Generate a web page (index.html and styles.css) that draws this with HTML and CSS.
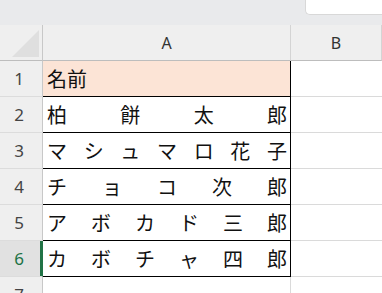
FILE: index.html
```html
<!DOCTYPE html>
<html lang="ja">
<head>
    <meta charset="UTF-8">
    <title>名前一覧</title>
    <link rel="stylesheet" href="styles.css">
</head>
<body>
    <div class="toolbar">
        <div class="namebox"></div>
    </div>
    <div class="sheet">
        <div class="corner"><div class="corner-mark"></div></div>
        <div class="col-head">A</div>
        <div class="col-head">B</div>

        <div class="row-head">1</div>
        <div class="cell title">名前</div>
        <div class="cell-empty"></div>

        <div class="row-head">2</div>
        <div class="cell spread"><span>柏</span><span>餅</span><span>太</span><span>郎</span></div>
        <div class="cell-empty"></div>

        <div class="row-head">3</div>
        <div class="cell spread"><span>マ</span><span>シ</span><span>ュ</span><span>マ</span><span>ロ</span><span>花</span><span>子</span></div>
        <div class="cell-empty"></div>

        <div class="row-head">4</div>
        <div class="cell spread"><span>チ</span><span>ョ</span><span>コ</span><span>次</span><span>郎</span></div>
        <div class="cell-empty"></div>

        <div class="row-head">5</div>
        <div class="cell spread"><span>ア</span><span>ボ</span><span>カ</span><span>ド</span><span>三</span><span>郎</span></div>
        <div class="cell-empty"></div>

        <div class="row-head selected">6</div>
        <div class="cell spread active"><span>カ</span><span>ボ</span><span>チ</span><span>ャ</span><span>四</span><span>郎</span></div>
        <div class="cell-empty"></div>

        <div class="row-head">7</div>
        <div class="cell-plain"></div>
        <div class="cell-empty"></div>
    </div>
</body>
</html>
```

FILE: styles.css
```css
body {
    margin: 0;
    background-color: #ffffff;
    font-family: "Noto Sans", "Noto Sans CJK JP", sans-serif;
    overflow: hidden;
}
.toolbar {
    height: 25px;
    background-color: #e9eaec;
    display: flex;
    justify-content: flex-end;
}
.namebox {
    width: 76px;
    height: 14px;
    background-color: #ffffff;
    border-left: 1px solid #d8d8d8;
    border-bottom: 1px solid #d8d8d8;
    border-bottom-left-radius: 5px;
}
.sheet {
    display: grid;
    grid-template-columns: 43px 248px 1fr;
    grid-auto-rows: 36px;
}
.corner {
    background-color: #efefef;
    border-right: 1px solid #c8c8c8;
    border-bottom: 1px solid #bdbdbd;
    display: flex;
    justify-content: flex-end;
    align-items: flex-end;
    padding: 0 3px 3px 0;
}
.corner-mark {
    width: 27px;
    height: 27px;
    background-color: #dfdfdf;
    clip-path: polygon(100% 0, 100% 100%, 0 100%);
}
.col-head {
    background-color: #efefef;
    border-bottom: 1px solid #bdbdbd;
    border-right: 1px solid #d4d4d4;
    display: flex;
    justify-content: center;
    align-items: center;
    font-size: 16px;
    color: #333333;
}
.row-head {
    background-color: #efefef;
    border-right: 1px solid #c8c8c8;
    border-bottom: 1px solid #dcdcdc;
    display: flex;
    justify-content: center;
    align-items: center;
    padding-right: 4px;
    font-size: 17px;
    color: #444444;
}
.row-head.selected {
    background-color: #e1e1e1;
    color: #217346;
    border-right-color: #217346;
    box-shadow: inset -2px 0 #217346;
}
.cell {
    border-right: 1px solid #000000;
    border-bottom: 1px solid #000000;
    display: flex;
    align-items: center;
    padding: 0 3px 0 4px;
    font-family: "Noto Sans CJK JP", sans-serif;
    font-size: 20px;
    color: #111111;
}
.title {
    background-color: #fce4d6;
}
.spread {
    justify-content: space-between;
}
.cell-empty {
    border-bottom: 1px solid #dadada;
}
.cell-plain {
    border-right: 1px solid #dadada;
}
```
